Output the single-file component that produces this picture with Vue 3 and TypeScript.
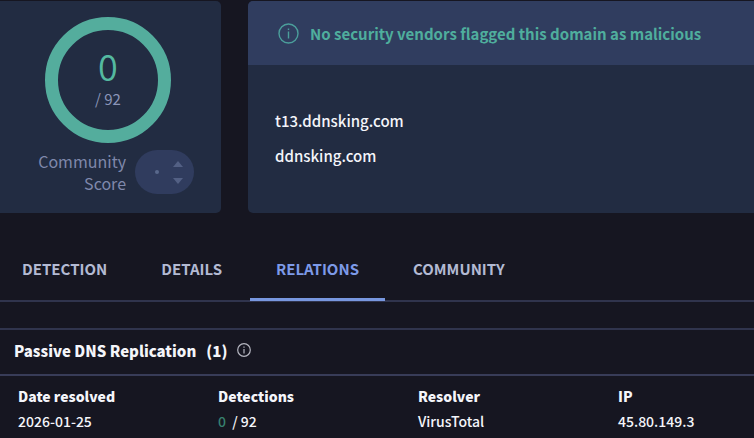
<script setup lang="ts">
import { ref } from 'vue'

interface Resolution {
  date: string
  detections: number
  engines: number
  resolver: string
  ip: string
}

const detections = 0
const engines = 92
const domains: string[] = ['t13.ddnsking.com', 'ddnsking.com']
const tabs: string[] = ['DETECTION', 'DETAILS', 'RELATIONS', 'COMMUNITY']
const activeTab = ref('RELATIONS')
const resolutions: Resolution[] = [
  { date: '2026-01-25', detections: 0, engines: 92, resolver: 'VirusTotal', ip: '45.80.149.3' },
]
</script>

<template>
  <main class="page">
    <section class="summary">
      <aside class="card score-card">
        <div class="score">
          <svg class="ring" viewBox="0 0 126 126" aria-hidden="true">
            <circle cx="63" cy="63" r="56.5" />
          </svg>
          <div class="score-text">
            <span class="count">{{ detections }}</span>
            <span class="total">/ {{ engines }}</span>
          </div>
        </div>
        <div class="community">
          <span class="community-label">Community Score</span>
          <div class="votes">
            <span class="vote-dot"></span>
            <div class="vote-buttons">
              <button type="button" class="vote" aria-label="Vote up">
                <svg viewBox="0 0 12 6"><path d="M6 0 11 6H1z" /></svg>
              </button>
              <button type="button" class="vote" aria-label="Vote down">
                <svg viewBox="0 0 12 6"><path d="M1 0h10L6 6z" /></svg>
              </button>
            </div>
          </div>
        </div>
      </aside>

      <article class="card domain-card">
        <header class="verdict">
          <svg class="verdict-icon" viewBox="0 0 21 21" aria-hidden="true">
            <circle cx="10.5" cy="10.5" r="9.5" />
            <path d="M10.5 8.5v7M10.5 5.4v1.6" />
          </svg>
          <span>No security vendors flagged this domain as malicious</span>
        </header>
        <div class="domains">
          <a v-for="domain in domains" :key="domain" href="#">{{ domain }}</a>
        </div>
      </article>
    </section>

    <nav class="tabs">
      <button
        v-for="tab in tabs"
        :key="tab"
        type="button"
        class="tab"
        :class="{ active: tab === activeTab }"
        @click="activeTab = tab"
      >
        {{ tab }}
      </button>
    </nav>

    <section class="replication">
      <h2 class="section-title">
        <span>Passive DNS Replication</span>
        <span>(1)</span>
        <svg class="info-icon" viewBox="0 0 14 14" aria-hidden="true">
          <circle cx="7" cy="7" r="6.3" />
          <path d="M7 6v4.5M7 3.6v1.2" />
        </svg>
      </h2>
      <table>
        <thead>
          <tr>
            <th scope="col">Date resolved</th>
            <th scope="col">Detections</th>
            <th scope="col">Resolver</th>
            <th scope="col">IP</th>
          </tr>
        </thead>
        <tbody>
          <tr v-for="row in resolutions" :key="row.ip">
            <td>{{ row.date }}</td>
            <td><span class="clean">{{ row.detections }}</span> / {{ row.engines }}</td>
            <td>{{ row.resolver }}</td>
            <td>{{ row.ip }}</td>
          </tr>
        </tbody>
      </table>
    </section>
  </main>
</template>

<style>
body {
  margin: 0;
  background: #161621;
}
</style>

<style scoped>
.page {
  font-family: "Noto Sans CJK SC", "Noto Sans", sans-serif;
  font-size: 14px;
  color: #f4f5fa;
  overflow: hidden;
}

button {
  font: inherit;
  color: inherit;
  background: none;
  border: 0;
  padding: 0;
  cursor: pointer;
}

.summary {
  display: flex;
  gap: 27px;
  padding-top: 1px;
}

.card {
  background: #222c42;
  border-radius: 5px;
  overflow: hidden;
}

.score-card {
  flex: none;
  box-sizing: border-box;
  width: 221px;
  padding: 16px 27px 19px 28px;
  border-radius: 0 5px 5px 0;
}

.score {
  display: grid;
  place-items: center;
  width: 126px;
  margin-left: 17px;
}

.score > * {
  grid-area: 1 / 1;
}

.ring {
  display: block;
  width: 126px;
  height: 126px;
  fill: none;
  stroke: #54ad9d;
  stroke-width: 13;
}

.score-text {
  display: flex;
  flex-direction: column;
  align-items: center;
  padding-top: 2px;
  color: #8b94b8;
}

.count {
  font-size: 36px;
  line-height: 36px;
  font-weight: 350;
  color: #54b9a0;
}

.total {
  font-size: 15px;
  line-height: 32px;
}

.community {
  display: flex;
  align-items: center;
  justify-content: flex-end;
  gap: 9px;
  margin-top: 7px;
}

.community-label {
  width: 98px;
  text-align: right;
  font-size: 16px;
  line-height: 22px;
  color: #7f88ab;
}

.votes {
  display: flex;
  align-items: center;
  justify-content: space-between;
  box-sizing: border-box;
  width: 59px;
  height: 44px;
  padding: 0 10px 0 20px;
  border-radius: 22px;
  background: #303c5e;
}

.vote-dot {
  width: 4px;
  height: 4px;
  border-radius: 50%;
  background: #59688c;
}

.vote-buttons {
  display: flex;
  flex-direction: column;
  gap: 11px;
}

.vote svg {
  display: block;
  width: 12px;
  height: 6px;
  fill: #536084;
}

.domain-card {
  flex: 1;
  min-width: 0;
  border-radius: 5px 0 0 5px;
}

.verdict {
  display: flex;
  align-items: center;
  gap: 11px;
  height: 64px;
  padding: 0 30px;
  background: #303d5f;
  color: #4fae9d;
  font-size: 15px;
  font-weight: 700;
  white-space: nowrap;
}

.verdict-icon {
  flex: none;
  width: 21px;
  height: 21px;
  fill: none;
  stroke: #4b9e9b;
  stroke-width: 1.4;
}

.domains {
  display: flex;
  flex-direction: column;
  align-items: flex-start;
  gap: 10px;
  padding: 43px 27px;
  font-size: 15px;
  font-weight: 500;
  line-height: 25px;
}

.domains a {
  color: inherit;
  text-decoration: none;
}

.tabs {
  display: flex;
  gap: 2px;
  margin: 26px 0 0 -4px;
  border-bottom: 2px solid #30344d;
}

.tab {
  height: 62px;
  margin-bottom: -1px;
  padding: 0 26px 1px;
  border-bottom: 3px solid transparent;
  font-size: 15px;
  font-weight: 700;
  color: #b3bad3;
}

.tab.active {
  color: #7d9ae8;
  border-bottom-color: #7897df;
}

.replication {
  margin-top: 26px;
  border-top: 2px solid #30344d;
}

.section-title {
  display: flex;
  align-items: center;
  gap: 10px;
  height: 40px;
  margin: 0;
  padding: 0 14px 4px;
  border-bottom: 2px solid #383c58;
  font-size: 15px;
  font-weight: 900;
}

.info-icon {
  width: 14px;
  height: 14px;
  fill: none;
  stroke: #b5b6c0;
  stroke-width: 1.2;
}

table {
  width: 100%;
  margin-top: 8px;
  table-layout: fixed;
  border-collapse: collapse;
}

th,
td {
  width: 182px;
  padding: 0 0 0 18px;
  text-align: left;
  font-size: 14px;
  line-height: 25px;
  white-space: nowrap;
}

th:last-child {
  width: auto;
}

th {
  font-weight: 900;
}

td {
  font-weight: 500;
}

.clean {
  margin-right: 3px;
  color: #37806f;
}
</style>
